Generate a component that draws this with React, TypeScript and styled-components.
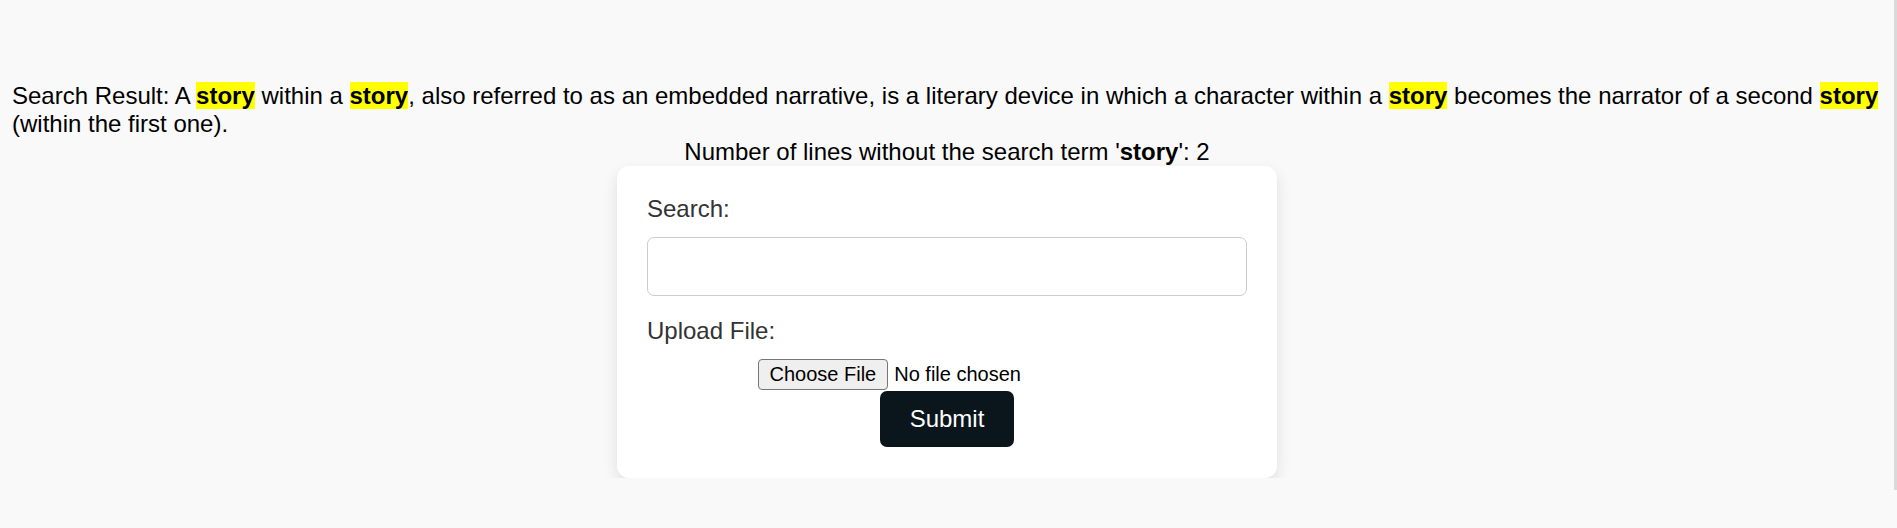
import React from "react";
import styled, { createGlobalStyle } from "styled-components";

const GlobalStyle = createGlobalStyle`
  html {
    border-right: 3px solid #dadada;
    background: #f9f9f9;
  }
  body {
    margin: 12px;
    background: #f9f9f9;
    font-family: "Liberation Sans", Arial, sans-serif;
    font-size: 24px;
    color: #000;
  }
`;

const TEXT =
  "A story within a story, also referred to as an embedded narrative, is a literary device in which a character within a story becomes the narrator of a second story (within the first one).";
const TERM = "story";

const Page = styled.div`
  display: flex;
  flex-direction: column;
  padding-top: 70px;
`;

const Result = styled.p`
  margin: 0;
  line-height: normal;
`;

const Highlight = styled.span`
  background: #ffff00;
  font-weight: bold;
`;

const Count = styled.p`
  margin: 0;
  text-align: center;
`;

const Card = styled.form`
  align-self: center;
  box-sizing: border-box;
  width: 660px;
  padding: 29px 30px 31px;
  background: #fff;
  border-radius: 12px;
  box-shadow: 0 6px 15px rgba(0, 0, 0, 0.11);
`;

const Field = styled.div<{ $gap: number }>`
  display: flex;
  flex-direction: column;
  margin-bottom: ${(p) => p.$gap}px;
`;

const Label = styled.label`
  color: #333;
  margin-bottom: 14px;
`;

const TextInput = styled.input`
  box-sizing: border-box;
  width: 100%;
  height: 59px;
  border: 1.5px solid #cccccc;
  border-radius: 7px;
  padding: 0 15px;
  font: inherit;
  outline: none;
`;

const Actions = styled.div`
  display: flex;
  flex-direction: column;
  align-items: center;
  gap: 1px;
`;

const FileInput = styled.input`
  width: 379px;
  height: 31px;
  font-family: "Liberation Sans", Arial, sans-serif;
  font-size: 20px;
  color: #000;

  &::file-selector-button {
    height: 31px;
    margin: 0 6px 0 0;
    padding: 0 11px;
    font: inherit;
    color: #000;
    background: #efefef;
    border: 1.5px solid #767676;
    border-radius: 4px;
  }
`;

const SubmitButton = styled.button`
  box-sizing: border-box;
  height: 56px;
  padding: 0 30px;
  border: none;
  border-radius: 7px;
  background: #0b161c;
  color: #fff;
  font-family: "Liberation Sans", Arial, sans-serif;
  font-size: 24px;
`;

function highlight(text: string, term: string) {
  const parts = text.split(term);
  return parts.map((part, i) => (
    <React.Fragment key={i}>
      {part}
      {i < parts.length - 1 && <Highlight>{term}</Highlight>}
    </React.Fragment>
  ));
}

export default function App() {
  return (
    <>
      <GlobalStyle />
      <Page>
        <Result>Search Result: {highlight(TEXT, TERM)}</Result>
        <Count>
          Number of lines without the search term '<b>{TERM}</b>': 2
        </Count>
        <Card onSubmit={(e) => e.preventDefault()}>
          <Field $gap={21}>
            <Label htmlFor="search">Search:</Label>
            <TextInput id="search" type="text" />
          </Field>
          <Field $gap={0}>
            <Label htmlFor="file">Upload File:</Label>
          </Field>
          <Actions>
            <FileInput id="file" type="file" />
            <SubmitButton type="submit">Submit</SubmitButton>
          </Actions>
        </Card>
      </Page>
    </>
  );
}
